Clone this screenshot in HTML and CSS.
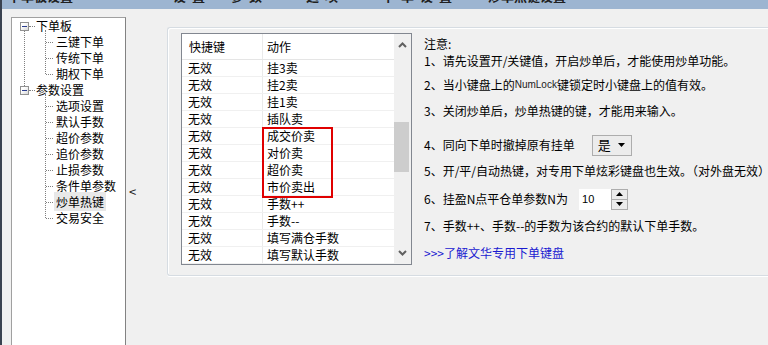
FILE: index.html
```html
<!DOCTYPE html>
<html lang="zh-CN">

<head>
    <meta charset="UTF-8">
    <title>炒单热键设置</title>
    <link rel="stylesheet" href="styles.css">
</head>

<body>
    <div class="title-bar">
        <span class="title-text">下单板设置</span>
        <span class="title-text t2">设置　参数　　选项　　下单设置</span>
        <span class="title-text t3">炒单热键设置</span>
    </div>
    <div class="window">
        <div class="edge"></div>
        <div class="tree">
            <div class="group first">
                <div class="node top"><span class="toggle"></span><span class="label">下单板</span></div>
                <div class="children">
                    <div class="node child"><span class="label">三键下单</span></div>
                    <div class="node child"><span class="label">传统下单</span></div>
                    <div class="node child"><span class="label">期权下单</span></div>
                </div>
            </div>
            <div class="group">
                <div class="node top"><span class="toggle"></span><span class="label">参数设置</span></div>
                <div class="children">
                    <div class="node child"><span class="label">选项设置</span></div>
                    <div class="node child"><span class="label">默认手数</span></div>
                    <div class="node child"><span class="label">超价参数</span></div>
                    <div class="node child"><span class="label">追价参数</span></div>
                    <div class="node child"><span class="label">止损参数</span></div>
                    <div class="node child"><span class="label">条件单参数</span></div>
                    <div class="node child"><span class="label selected">炒单热键</span></div>
                    <div class="node child"><span class="label">交易安全</span></div>
                </div>
            </div>
        </div>
        <div class="splitter"><span class="collapse">&lt;</span></div>
        <div class="panel">
            <div class="list">
                <div class="list-body">
                    <div class="list-head">
                        <div class="col1">快捷键</div>
                        <div class="col2">动作</div>
                    </div>
                    <div class="row"><div class="col1">无效</div><div class="col2">挂3卖</div></div>
                    <div class="row"><div class="col1">无效</div><div class="col2">挂2卖</div></div>
                    <div class="row"><div class="col1">无效</div><div class="col2">挂1卖</div></div>
                    <div class="row"><div class="col1">无效</div><div class="col2">插队卖</div></div>
                    <div class="row"><div class="col1">无效</div><div class="col2">成交价卖</div></div>
                    <div class="row"><div class="col1">无效</div><div class="col2">对价卖</div></div>
                    <div class="row"><div class="col1">无效</div><div class="col2">超价卖</div></div>
                    <div class="row"><div class="col1">无效</div><div class="col2">市价卖出</div></div>
                    <div class="row"><div class="col1">无效</div><div class="col2">手数++</div></div>
                    <div class="row"><div class="col1">无效</div><div class="col2">手数--</div></div>
                    <div class="row"><div class="col1">无效</div><div class="col2">填写满仓手数</div></div>
                    <div class="row"><div class="col1">无效</div><div class="col2">填写默认手数</div></div>
                </div>
                <div class="scrollbar">
                    <svg class="arrow" width="9" height="6" viewBox="0 0 9 6"><path d="M1 5 L4.5 1.5 L8 5" fill="none" stroke="#606060" stroke-width="2"/></svg>
                    <div class="track"><div class="thumb"></div></div>
                    <svg class="arrow" width="9" height="6" viewBox="0 0 9 6"><path d="M1 1 L4.5 4.5 L8 1" fill="none" stroke="#606060" stroke-width="2"/></svg>
                </div>
                <div class="mark"></div>
            </div>
            <div class="notes">
                <div class="line note-title">注意:</div>
                <div class="line l1">1、请先设置开/关键值，开启炒单后，才能使用炒单功能。</div>
                <div class="line l2">2、当小键盘上的<span class="small">NumLock</span>键锁定时小键盘上的值有效。</div>
                <div class="line">3、关闭炒单后，炒单热键的键，才能用来输入。</div>
                <div class="line l4">4、同向下单时撤掉原有挂单
                    <span class="combo">是<svg width="7" height="4" viewBox="0 0 7 4"><path d="M0 0 H7 L3.5 4 Z" fill="#000"/></svg></span>
                </div>
                <div class="line">5、开/平/自动热键，对专用下单炫彩键盘也生效。（对外盘无效）</div>
                <div class="line l6">6、挂盈N点平仓单参数N为
                    <span class="spin"><span class="spin-value">10</span><span class="spin-btns"><span class="spin-btn"><svg width="7" height="4" viewBox="0 0 7 4"><path d="M0 4 H7 L3.5 0 Z" fill="#000"/></svg></span><span class="spin-btn"><svg width="7" height="4" viewBox="0 0 7 4"><path d="M0 0 H7 L3.5 4 Z" fill="#000"/></svg></span></span></span>
                </div>
                <div class="line l7">7、手数++、手数--的手数为该合约的默认下单手数。</div>
                <div class="line link">&gt;&gt;&gt;了解文华专用下单键盘</div>
            </div>
        </div>
    </div>
</body>

</html>
```

FILE: styles.css
```css
body {
    margin: 0;
    background: #f0f0f0;
    font-family: "Noto Sans CJK SC", "Liberation Sans", sans-serif;
    font-size: 12px;
    color: #000;
    width: 768px;
    height: 345px;
    overflow: hidden;
}

.title-bar {
    height: 9px;
    background: #9db5d1;
    overflow: hidden;
    display: flex;
    border-left: 2px solid #3a4250;
}

.title-text {
    margin-top: -11px;
    margin-left: 6px;
    font-size: 13px;
    font-weight: bold;
    line-height: 14px;
    color: #202020;
    white-space: nowrap;
}

.title-text.t2 {
    margin-left: 100px;
    letter-spacing: 6px;
}

.title-text.t3 {
    margin-left: 30px;
}

.window {
    display: flex;
    height: 336px;
}

.window > * {
    flex-shrink: 0;
}

.edge {
    width: 2px;
    background: #3a4250;
}

/* 左侧树 */
.tree {
    margin: 8px 0 0 9px;
    width: 115px;
    box-sizing: border-box;
    height: 340px;
    background: #fff;
    border: 1px solid #a0a0a0;
    border-right-color: #828282;
    position: relative;
}

.group {
    position: relative;
}

.group.first::before {
    content: "";
    position: absolute;
    left: 12px;
    top: 13px;
    height: 57px;
    border-left: 1px dotted #808080;
}

.node {
    height: 16px;
    line-height: 16px;
    position: relative;
    white-space: nowrap;
}

.node.top {
    padding-left: 24px;
}

.toggle {
    position: absolute;
    left: 8px;
    top: 4px;
    width: 7px;
    height: 7px;
    border: 1px solid #919191;
    background: linear-gradient(135deg, #fff 30%, #d8d8d8 100%);
}

.toggle::after {
    content: "";
    position: absolute;
    left: 1px;
    top: 3px;
    width: 5px;
    height: 1px;
    background: #2a3d8f;
}

.node.top::before {
    content: "";
    position: absolute;
    left: 17px;
    top: 8px;
    width: 6px;
    border-top: 1px dotted #808080;
}

.children {
    position: relative;
}

.children::before {
    content: "";
    position: absolute;
    left: 33px;
    top: -4px;
    bottom: 8px;
    border-left: 1px dotted #808080;
}

.node.child {
    padding-left: 44px;
}

.node.child::before {
    content: "";
    position: absolute;
    left: 34px;
    top: 8px;
    width: 7px;
    border-top: 1px dotted #808080;
}

.label {
    padding: 1px 0;
}

.label.selected {
    background: #e8e8e8;
    padding: 1px 2px;
    margin-left: -2px;
}

.splitter {
    width: 41px;
    margin-top: 8px;
    display: flex;
    align-items: flex-start;
}

.collapse {
    margin: 168px 0 0 3px;
    font-size: 13px;
    line-height: 14px;
    color: #202020;
}

/* 右侧面板 */
.panel {
    margin-top: 18px;
    width: 601px;
    height: 249px;
    box-sizing: border-box;
    border: 1px solid #d6dce2;
    border-right: none;
    border-radius: 3px 0 0 3px;
    box-shadow: inset 1px 1px 0 #fff, 0 1px 0 #fff;
    display: flex;
    align-items: flex-start;
}

.list {
    margin: 5px 0 0 13px;
    width: 231px;
    height: 232px;
    box-sizing: border-box;
    border: 1px solid #828790;
    background: #fff;
    display: flex;
    position: relative;
    flex-shrink: 0;
}

.list-body {
    width: 212px;
}

.list-head {
    display: flex;
    height: 25px;
    line-height: 25px;
    border-bottom: 1px solid #e5e5e5;
}

.row {
    display: flex;
    height: 17px;
    line-height: 16px;
    border-bottom: 1px solid #f0f0f0;
    box-sizing: border-box;
}

.col1 {
    width: 81px;
    padding-left: 6px;
    box-sizing: border-box;
    border-right: 1px solid #eaeaea;
}

.list-head .col1 {
    padding-left: 7px;
}

.col2 {
    padding-left: 4px;
}

.scrollbar {
    width: 17px;
    background: #f0f0f0;
    display: flex;
    flex-direction: column;
    align-items: center;
}

.scrollbar .arrow {
    margin: 8px 0;
}

.track {
    flex: 1;
    width: 100%;
    position: relative;
}

.thumb {
    margin-top: 66px;
    width: 15px;
    height: 50px;
    background: #cdcdcd;
}

.mark {
    position: absolute;
    left: 80px;
    top: 93px;
    width: 67px;
    height: 67px;
    border: 2px solid #e00000;
}

.notes {
    margin-left: 12px;
    padding-top: 7px;
    flex-shrink: 0;
}

.line {
    height: 26px;
    line-height: 26px;
    white-space: nowrap;
    display: flex;
    align-items: center;
}

.note-title {
    height: 17px;
    line-height: 17px;
}

.line.l1 {
    height: 17px;
    line-height: 17px;
}

.line.l2 {
    margin-top: 3px;
}

.line.l4 {
    margin-top: 8px;
}

.line.l6 {
    margin-top: 2px;
}

.line.l7 {
    margin-top: 1px;
}

.small {
    font-family: "Liberation Sans", sans-serif;
    font-size: 10px;
    color: #222;
}

.combo {
    margin-left: 17px;
    border: 1px solid #adadad;
    background: #ececec;
    display: flex;
    align-items: center;
    justify-content: space-between;
    padding: 0 6px 0 5px;
    box-sizing: border-box;
    width: 40px;
    height: 21px;
    font-size: 13px;
}

.spin {
    margin-left: 11px;
    display: flex;
    height: 21px;
}

.spin-value {
    width: 32px;
    background: #fff;
    font-family: "Liberation Sans", sans-serif;
    font-size: 11px;
    line-height: 21px;
    padding-left: 3px;
    box-sizing: border-box;
}

.spin-btns {
    width: 17px;
    display: flex;
    flex-direction: column;
    border: 1px solid #adadad;
    box-sizing: border-box;
}

.spin-btn {
    flex: 1;
    background: #ececec;
    display: flex;
    align-items: center;
    justify-content: center;
}

.spin-btn + .spin-btn {
    border-top: 1px solid #adadad;
}

.link {
    color: #1a1ad0;
    margin-top: 1px;
}
```
